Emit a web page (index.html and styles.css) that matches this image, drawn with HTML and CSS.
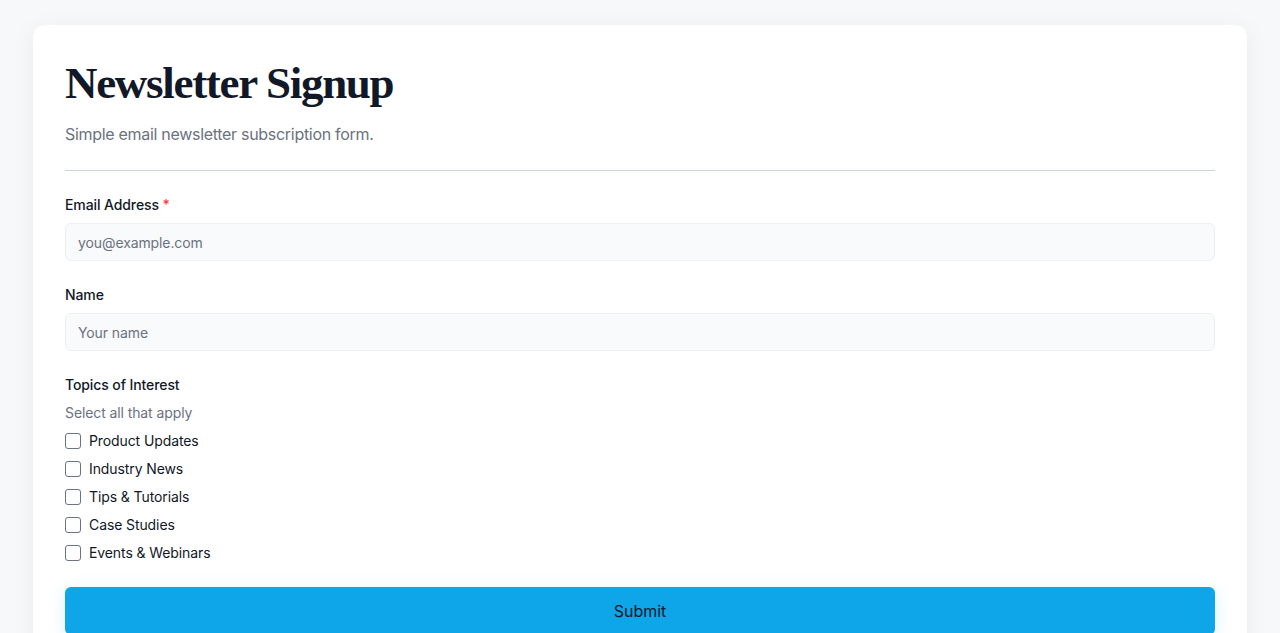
FILE: index.html
```html
<!DOCTYPE html>
<html lang="en">
<head>
    <meta charset="UTF-8">
    <meta name="viewport" content="width=device-width, initial-scale=1.0">
    <title>Newsletter Signup</title>
    <link rel="stylesheet" href="styles.css">
</head>
<body>
    <main class="card">
        <header class="card-header">
            <h1>Newsletter Signup</h1>
            <p class="subtitle">Simple email newsletter subscription form.</p>
        </header>

        <form class="signup-form">
            <div class="field">
                <label for="email">Email Address <span class="required">*</span></label>
                <input type="email" id="email" placeholder="you@example.com">
            </div>

            <div class="field">
                <label for="name">Name</label>
                <input type="text" id="name" placeholder="Your name">
            </div>

            <div class="field">
                <span class="label">Topics of Interest</span>
                <span class="hint">Select all that apply</span>
                <div class="options">
                    <label class="option"><input type="checkbox"> Product Updates</label>
                    <label class="option"><input type="checkbox"> Industry News</label>
                    <label class="option"><input type="checkbox"> Tips &amp; Tutorials</label>
                    <label class="option"><input type="checkbox"> Case Studies</label>
                    <label class="option"><input type="checkbox"> Events &amp; Webinars</label>
                </div>
            </div>

            <button type="submit" class="submit-btn">Submit</button>
        </form>
    </main>
</body>
</html>
```

FILE: styles.css
```css
body {
    margin: 0;
    padding: 25px 33px;
    background: #f7f8fa;
    font-family: Inter, "Noto Sans", sans-serif;
    color: #111827;
}
.card {
    background: #fff;
    border-radius: 12px;
    padding: 32px;
    box-shadow: 0 4px 24px rgba(15, 23, 42, 0.06);
}
.card-header {
    padding-bottom: 24px;
    border-bottom: 1px solid #cbd5e1;
}
h1 {
    margin: 0;
    font-family: "Liberation Serif", "DejaVu Serif", serif;
    font-size: 45px;
    line-height: 53px;
    font-weight: 700;
    letter-spacing: -1.3px;
    color: #111827;
}
.subtitle {
    margin: 12px 0 0;
    font-size: 16px;
    line-height: 24px;
    letter-spacing: -0.3px;
    color: #6b7280;
}
.signup-form {
    margin-top: 24px;
    display: flex;
    flex-direction: column;
    gap: 24px;
}
.field {
    display: flex;
    flex-direction: column;
}
.field > label,
.label {
    font-size: 14px;
    line-height: 20px;
    font-weight: 500;
    letter-spacing: -0.1px;
    margin-bottom: 8px;
}
.required {
    color: #ef4444;
}
.field input[type="email"],
.field input[type="text"] {
    height: 38px;
    box-sizing: border-box;
    padding: 0 12px;
    border: 1px solid #eceff3;
    border-radius: 6px;
    background: #f8fafc;
    font-family: inherit;
    font-size: 14px;
    letter-spacing: -0.1px;
    color: #111827;
}
.field input::placeholder {
    color: #6b7280;
}
.hint {
    font-size: 14px;
    line-height: 20px;
    letter-spacing: -0.1px;
    color: #6b7280;
    margin-bottom: 8px;
}
.options {
    display: flex;
    flex-direction: column;
    gap: 8px;
}
.option {
    display: flex;
    align-items: center;
    gap: 8px;
    font-size: 14px;
    line-height: 20px;
    letter-spacing: -0.1px;
    color: #111827;
}
.option input {
    appearance: none;
    margin: 0;
    width: 16px;
    height: 16px;
    border: 1px solid #6b7280;
    border-radius: 3px;
    background: #fff;
}
.submit-btn {
    height: 48px;
    border: none;
    border-radius: 6px;
    background: #0ea5e9;
    color: #111827;
    font-family: inherit;
    font-size: 16px;
    box-shadow: 0 4px 18px rgba(14, 165, 233, 0.15);
    cursor: pointer;
}
```
